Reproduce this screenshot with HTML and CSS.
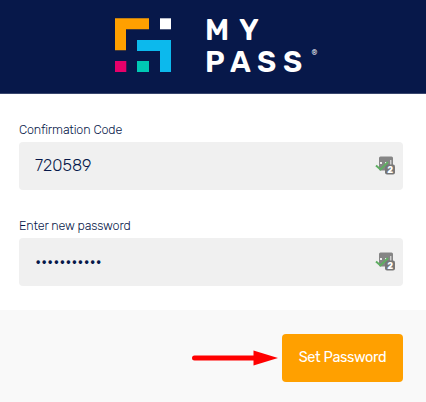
FILE: index.html
```html
<!DOCTYPE html>
<html lang="en">
  <head>
    <meta charset="utf-8">
    <title>MyPass - Set Password</title>
    <link rel="stylesheet" href="styles.css">
  </head>
  <body>
    <header class="header">
      <svg class="logo" width="204" height="76" viewBox="0 -10 204 76">
        <path fill="#ffa000" d="M0 .3h34v11H11v21H0z"/>
        <path fill="#fff" d="M45 .3h11v11H45z"/>
        <path fill="#0cb9ed" d="M22 22h34v32H45V33H22z"/>
        <path fill="#e6006a" d="M0 43h11.3v11H0z"/>
        <path fill="#00c8b4" d="M22 43h12v11H22z"/>
        <g class="logo-text">
          <text x="90" y="22">M</text>
          <text x="124" y="22">Y</text>
          <text x="90" y="53.500">P</text>
          <text x="115" y="53.500">A</text>
          <text x="142" y="53.500">S</text>
          <text x="168" y="53.500">S</text>
        </g>
        <text class="logo-mark" x="196.500" y="37">®</text>
      </svg>
    </header>
    <form>
      <div class="fields">
        <label for="code">Confirmation Code</label>
        <div class="field">
          <input type="text" id="code" value="720589">
          <svg class="manager" width="21" height="20" viewBox="0 0 21 20">
            <rect x="4" y="0.500" width="14" height="14" rx="1.500" fill="#858585"/>
            <path fill="#eee" d="M5 6h2v2H5zM10 6h2v2h-2zM15.300 4h1v5h-1z"/>
            <rect x="10" y="8.500" width="10" height="10" rx="2" fill="#777"/>
            <path d="M1 9.500l4.500 4L13 6" fill="none" stroke="#5eae61" stroke-width="2"/>
            <text class="count" x="12.200" y="17">2</text>
          </svg>
        </div>
        <label for="password">Enter new password</label>
        <div class="field">
          <input type="password" id="password" value="abcdefghijk">
          <svg class="manager" width="21" height="20" viewBox="0 0 21 20">
            <rect x="4" y="0.500" width="14" height="14" rx="1.500" fill="#858585"/>
            <path fill="#eee" d="M5 6h2v2H5zM10 6h2v2h-2zM15.300 4h1v5h-1z"/>
            <rect x="10" y="8.500" width="10" height="10" rx="2" fill="#777"/>
            <path d="M1 9.500l4.500 4L13 6" fill="none" stroke="#5eae61" stroke-width="2"/>
            <text class="count" x="12.200" y="17">2</text>
          </svg>
        </div>
      </div>
      <div class="footer">
        <svg class="arrow" width="87" height="16" viewBox="0 0 87 16">
          <path d="M2.500 8H64" stroke="#f00" stroke-width="5" stroke-linecap="round"/>
          <path d="M61.500.5L86 8l-24.500 7.500z" fill="#f00"/>
        </svg>
        <button class="button" type="button">Set Password</button>
      </div>
    </form>
  </body>
</html>
```

FILE: styles.css
```css
* {
  box-sizing: border-box;
}
body {
  margin: 0;
  background: #fff;
  color: #07184a;
  font-family: Rubik, Roboto, sans-serif;
}
.header {
  height: 94px;
  padding: 8px 0 0 115px;
  background: #07184a;
  border-bottom: 1px solid #39466e;
}
.logo {
  display: block;
  overflow: visible;
}
.logo-text {
  fill: #fff;
  font-size: 29.5px;
  font-weight: 600;
}
.logo-mark {
  fill: #fff;
  font-size: 7px;
}
.fields {
  height: 215.5px;
  padding: 28px 23px 0 19px;
}
label {
  display: block;
  height: 20px;
  font-size: 12.5px;
  font-weight: 350;
  line-height: 16px;
  letter-spacing: -0.15px;
}
.field {
  display: flex;
  align-items: center;
  height: 47.5px;
  margin-bottom: 28.5px;
  padding: 0 7px 0 16px;
  background: #f0f0f0;
  border-radius: 4px;
}
.field input {
  flex: 1;
  min-width: 0;
  padding: 0;
  border: none;
  outline: none;
  background: none;
  color: inherit;
  font-family: inherit;
  font-size: 16.5px;
  font-weight: 350;
}
.field input[type="password"] {
  font-weight: 400;
  letter-spacing: -0.25px;
}
.manager {
  flex: none;
}
.count {
  fill: #fff;
  font-size: 9px;
  font-weight: 700;
}
.footer {
  display: flex;
  justify-content: flex-end;
  gap: 3px;
  height: 92.5px;
  padding: 24px 23px 0 0;
  background: #f9f9f9;
}
.arrow {
  margin-top: 16px;
}
.button {
  width: 121px;
  height: 48px;
  padding: 0 0 1px;
  border: none;
  border-radius: 4px;
  background: #ffa000;
  color: #fff;
  font-family: inherit;
  font-size: 14.5px;
  font-weight: 450;
  letter-spacing: -0.35px;
}
```
